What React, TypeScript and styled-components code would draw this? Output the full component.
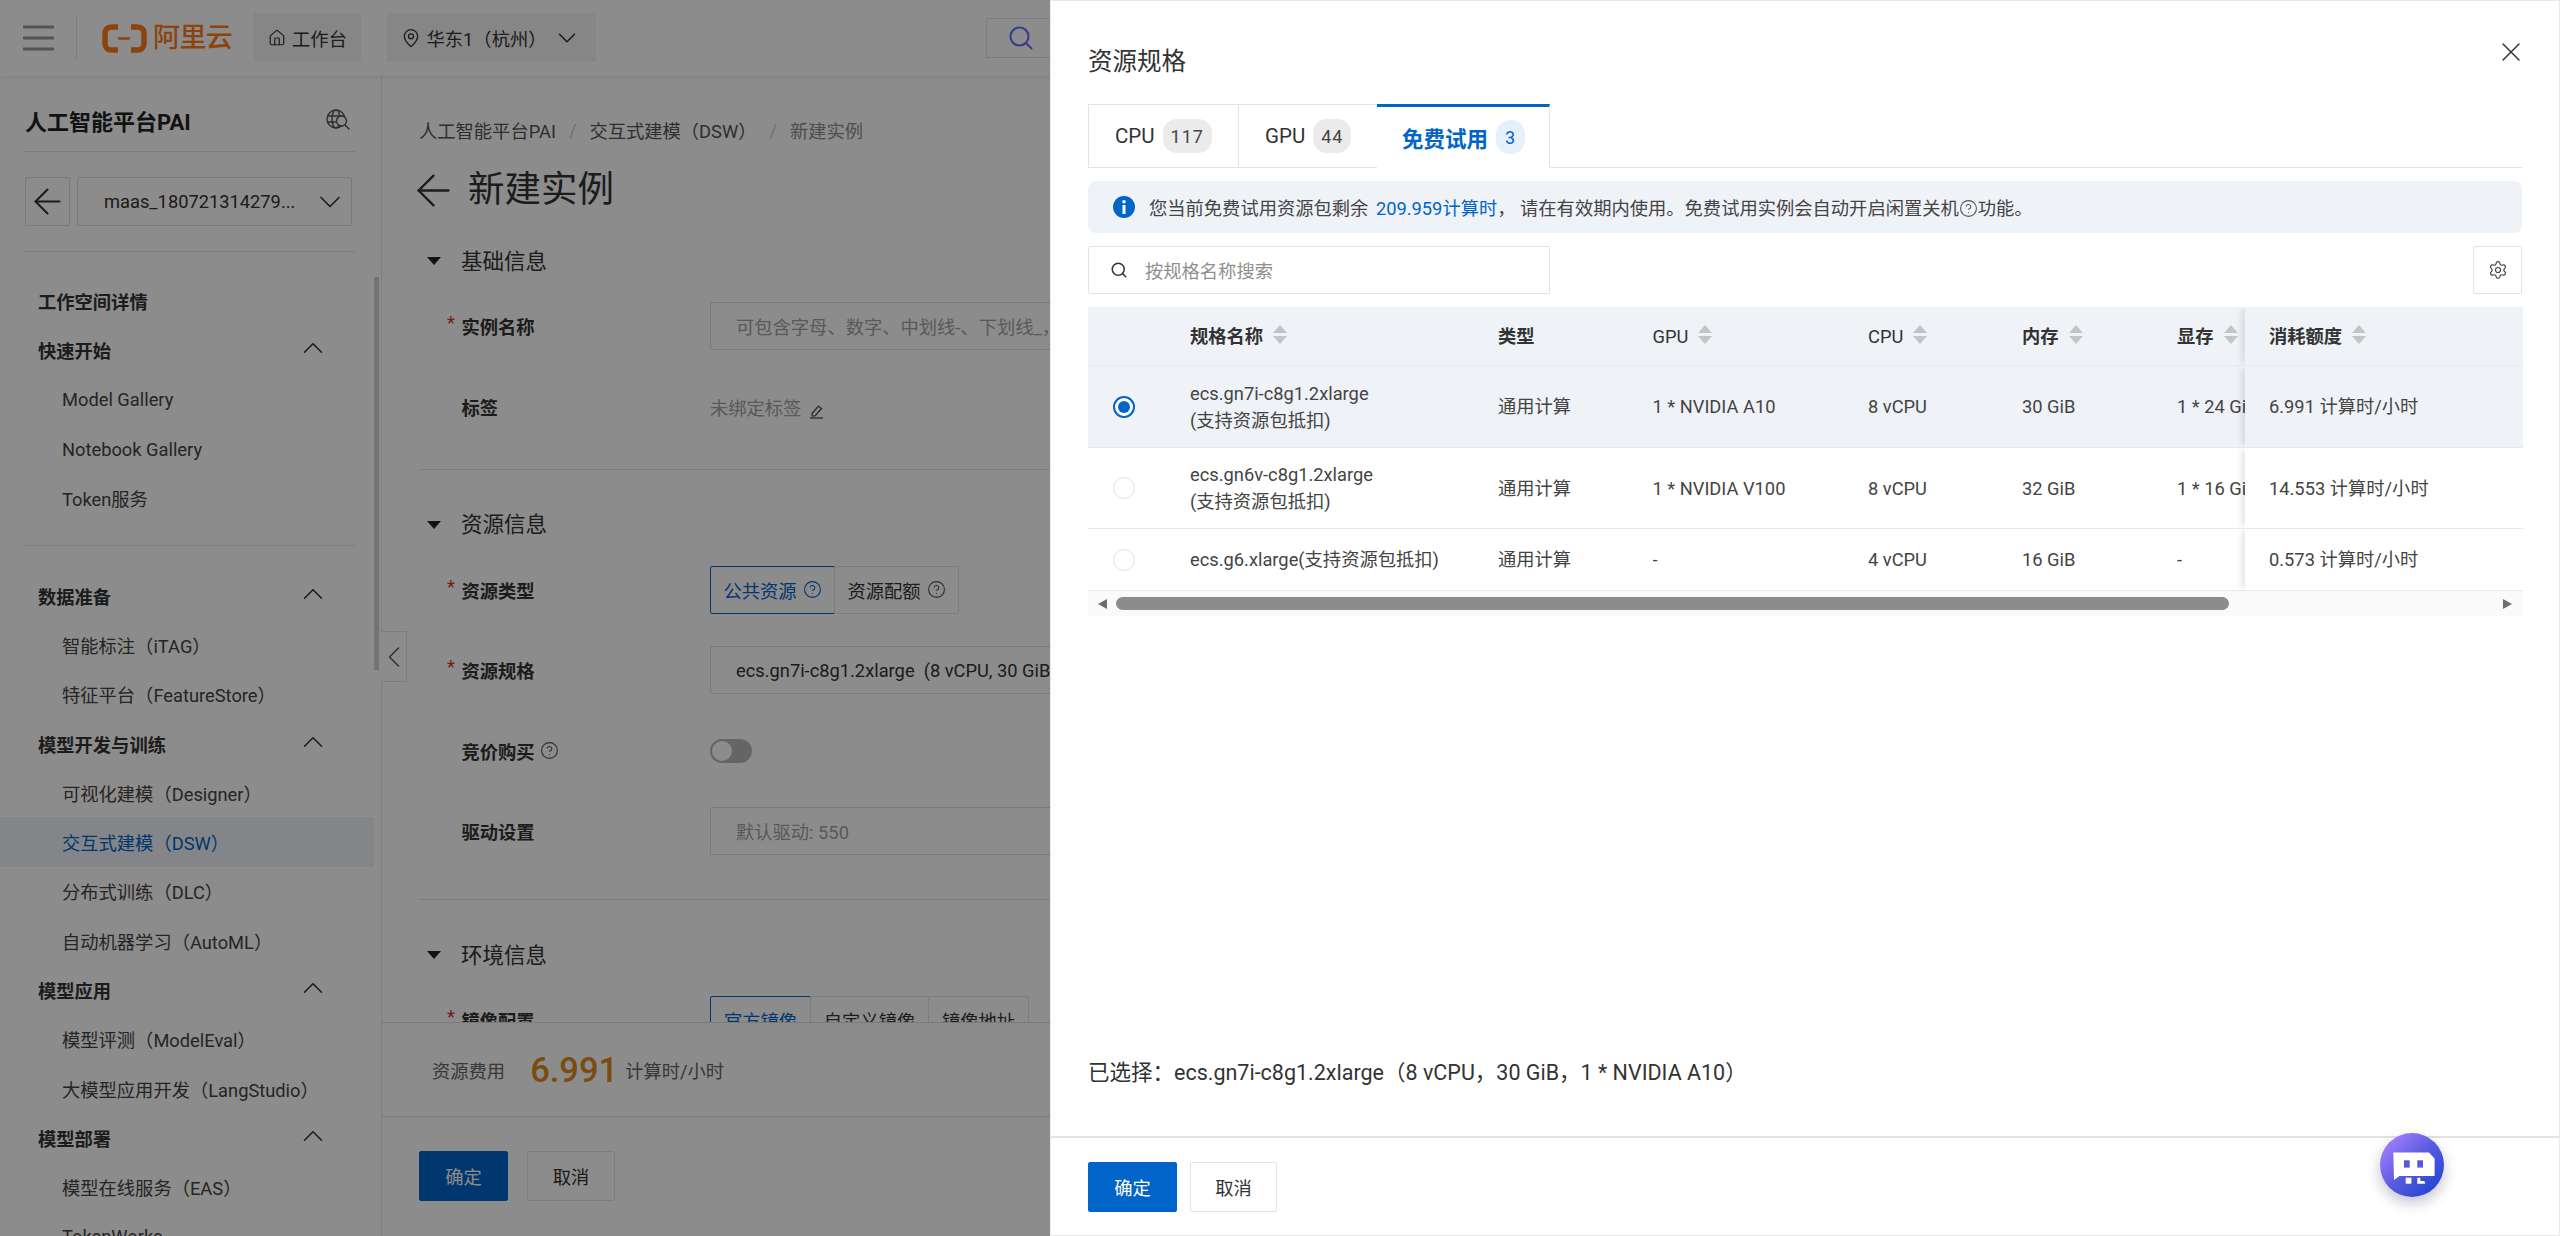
import React from "react";
import styled, { createGlobalStyle } from "styled-components";
import {
  ArrowLeft,
  ChevronDown,
  ChevronLeft,
  ChevronUp,
  CircleHelp,
  House,
  MapPin,
  Search,
  Settings,
  X,
} from "lucide-react";

const GlobalStyle = createGlobalStyle`
  html, body {
    margin: 0;
    height: 100%;
    overflow: hidden;
    background: #fff;
  }
  * {
    box-sizing: border-box;
  }
  body {
    font-family: Roboto, "Noto Sans CJK SC", sans-serif;
    font-size: 18.3px;
    color: #333;
  }
`;

const Page = styled.div`
  position: relative;
  width: 2560px;
  height: 1236px;
  overflow: hidden;
  display: flex;
  flex-direction: column;
`;

/* top bar */
const TopBar = styled.header`
  flex: none;
  height: 76px;
  display: flex;
  align-items: center;
  background: #fff;
  box-shadow: 0 2px 6px rgba(0, 0, 0, 0.08);
  position: relative;
  z-index: 1;
`;

const MenuButton = styled.div`
  width: 77px;
  height: 44px;
  display: flex;
  align-items: center;
  padding-left: 23px;
  border-right: 1px solid #e3e3e3;
`;

const LogoWrap = styled.div`
  width: 177px;
  display: flex;
  align-items: center;
  padding-left: 25px;
  gap: 6px;
`;

const LogoText = styled.span`
  font-size: 27px;
  font-weight: 500;
  color: #ff7a1a;
  letter-spacing: -0.6px;
  line-height: 30px;
`;

const TopButton = styled.div<{ $w: number }>`
  width: ${(p) => p.$w}px;
  height: 49px;
  margin-top: -1px;
  background: #f5f5f5;
  display: flex;
  align-items: center;
  justify-content: center;
  gap: 6px;
  color: #333;
  margin-right: 26px;

  svg {
    flex: none;
  }
`;

const TopSearch = styled.div`
  margin-left: 364px;
  width: 400px;
  height: 40px;
  border: 1px solid #e3e3e3;
  padding-left: 22px;
  display: flex;
  align-items: center;
`;

/* sidebar */
const Body = styled.div`
  flex: 1;
  min-height: 0;
  display: flex;
`;

const Sidebar = styled.aside`
  position: relative;
  flex: none;
  width: 382px;
  border-right: 1px solid #e8e8e8;
  overflow: hidden;
`;

const SideTitleRow = styled.div`
  height: 76px;
  margin: 0 26px 0 24px;
  display: flex;
  align-items: center;
  justify-content: space-between;
  border-bottom: 1px solid #e3e3e3;
  padding: 12px 4px 0 1px;
`;

const SideTitle = styled.div`
  font-size: 22px;
  font-weight: 700;
  color: #222;
`;

const WorkspaceRow = styled.div`
  height: 100px;
  margin: 0 26px 0 24px;
  display: flex;
  align-items: center;
  gap: 7px;
  border-bottom: 1px solid #e3e3e3;
  padding: 0 3px 0 1px;
`;

const BackBox = styled.div`
  width: 45px;
  height: 49px;
  border: 1px solid #ddd;
  border-radius: 2px;
  display: flex;
  align-items: center;
  justify-content: center;

  svg {
    flex: none;
  }
`;

const WorkspaceSelect = styled.div`
  flex: 1;
  height: 49px;
  border: 1px solid #ddd;
  border-radius: 2px;
  display: flex;
  align-items: center;
  justify-content: space-between;
  padding: 0 3px 0 26px;
`;

const Nav = styled.nav`
  padding-top: 24.5px;
`;

const NavGroup = styled.div`
  height: 49.3px;
  padding: 0 51px 0 38px;
  display: flex;
  align-items: center;
  justify-content: space-between;
  font-weight: 700;
  color: #333;

  svg {
    flex: none;
    margin-top: -4px;
  }
`;

const NavItem = styled.div<{ $active?: boolean }>`
  height: 49.3px;
  width: 374px;
  padding-left: 62px;
  display: flex;
  align-items: center;
  color: ${(p) => (p.$active ? "#0064c8" : "#444")};
  background: ${(p) => (p.$active ? "#eff3f8" : "transparent")};
  white-space: nowrap;
`;

const NavDivider = styled.div`
  height: 1px;
  margin: 22px 26px 25px 24px;
  background: #e8e8e8;
`;

const SideScroll = styled.div`
  position: absolute;
  right: 2px;
  top: 201px;
  width: 5px;
  height: 393px;
  background: #cfd1d8;
`;

const CollapseTab = styled.div`
  position: absolute;
  left: 381px;
  top: 631px;
  width: 26px;
  height: 51px;
  background: #fff;
  border: 1px solid #e3e3e3;
  border-left: none;
  display: flex;
  align-items: center;
  justify-content: center;
  z-index: 1;

  svg {
    flex: none;
  }
`;

/* main form */
const Main = styled.main`
  flex: 1;
  min-width: 0;
  display: flex;
  flex-direction: column;
`;

const MainScroll = styled.div`
  flex: 1;
  min-height: 0;
  overflow: hidden;
  padding: 42px 0 0 37px;
`;

const Crumbs = styled.div`
  height: 24px;
  display: flex;
  align-items: center;
  color: #555;
  white-space: nowrap;
`;

const CrumbSep = styled.span`
  color: #ccc;
  margin: 0 13px;
`;

const CrumbCurrent = styled.span`
  color: #8f8f8f;
`;

const TitleRow = styled.div`
  margin-top: 24px;
  height: 48px;
  display: flex;
  align-items: center;
  gap: 9px;

  svg {
    flex: none;
    margin-left: -11px;
  }
`;

const PageTitle = styled.h1`
  margin: 0;
  font-size: 36.5px;
  font-weight: 400;
  color: #333;
  line-height: 50px;
`;

const SectionHead = styled.div<{ $top: number }>`
  margin-top: ${(p) => p.$top}px;
  height: 30px;
  display: flex;
  align-items: center;
  padding-left: 8px;
  gap: 20px;
  font-size: 21.5px;
  color: #333;
`;

const SectionLabel = styled.span`
  margin-top: -4px;
`;

const Triangle = styled.i`
  width: 0;
  height: 0;
  border-left: 7.5px solid transparent;
  border-right: 7.5px solid transparent;
  border-top: 8px solid #222;
`;

const FormGroup = styled.div`
  margin-top: 26px;
  display: flex;
  flex-direction: column;
  gap: 32.5px;
`;

const FormRow = styled.div`
  height: 48px;
  display: flex;
  align-items: center;
`;

const Label = styled.label<{ $required?: boolean }>`
  position: relative;
  width: 291px;
  flex: none;
  padding-left: 42.5px;
  font-weight: 700;
  color: #333;
  display: flex;
  align-items: center;
  gap: 5px;

  &::before {
    content: ${(p) => (p.$required ? '"*"' : "none")};
    position: absolute;
    left: 28px;
    top: -1px;
    color: #d93026;
    font-weight: 400;
  }
`;

const FieldBox = styled.div<{ $muted?: boolean }>`
  width: 700px;
  height: 48px;
  border: 1px solid #ddd;
  border-radius: 2px;
  padding-left: 25px;
  display: flex;
  align-items: center;
  color: ${(p) => (p.$muted ? "#a3a3a3" : "#333")};
  white-space: pre;
  overflow: hidden;
`;

const TagText = styled.div`
  display: flex;
  align-items: center;
  gap: 8px;
  color: #a3a3a3;
`;

const EditSvg = styled.svg`
  margin-top: 9px;
`;

const Segments = styled.div`
  display: flex;
`;

const Segment = styled.div<{ $active?: boolean; $w: number }>`
  width: ${(p) => p.$w}px;
  height: 48px;
  display: flex;
  align-items: center;
  justify-content: center;
  gap: 6px;
  color: ${(p) => (p.$active ? "#0064c8" : "#333")};
  border: 1px solid ${(p) => (p.$active ? "#0064c8" : "#e3e3e3")};
  border-radius: 2px;
  margin-left: -1px;
  white-space: nowrap;

  &:first-child {
    margin-left: 0;
  }
`;

const Toggle = styled.div`
  width: 42px;
  height: 24px;
  border-radius: 12px;
  background: #b9b9b9;
  padding: 2px;
  display: flex;

  &::before {
    content: "";
    width: 20px;
    height: 20px;
    border-radius: 50%;
    background: #fff;
  }
`;

const Rule = styled.div<{ $top: number }>`
  margin-top: ${(p) => p.$top}px;
  height: 1px;
  background: #e3e3e3;
`;

const MainFooter = styled.div`
  flex: none;
  height: 214px;
  background: #fff;
  border-top: 1px solid #ddd;
`;

const PriceRow = styled.div`
  height: 94px;
  padding-left: 50px;
  display: flex;
  align-items: center;
  border-bottom: 1px solid #ddd;
  color: #666;
  white-space: nowrap;
`;

const PriceValue = styled.span`
  font-size: 34.5px;
  font-weight: 500;
  color: #e08a1e;
  margin: 0 7px 0 25px;
`;

const ButtonRow = styled.div<{ $gap: number; $top: number }>`
  display: flex;
  gap: ${(p) => p.$gap}px;
  padding: ${(p) => p.$top}px 0 0 37px;
`;

const Btn = styled.button<{ $primary?: boolean; $w: number }>`
  width: ${(p) => p.$w}px;
  height: 50px;
  font: inherit;
  border-radius: 2px;
  border: 1px solid ${(p) => (p.$primary ? "#0064c8" : "#e3e3e3")};
  background: ${(p) => (p.$primary ? "#0064c8" : "#fff")};
  color: ${(p) => (p.$primary ? "#fff" : "#333")};
  padding: 0;
`;

/* drawer */
const Mask = styled.div`
  position: absolute;
  inset: 0;
  background: rgba(0, 0, 0, 0.45);
  z-index: 5;
`;

const Drawer = styled.section`
  position: absolute;
  top: 0;
  right: 0;
  bottom: 0;
  width: 1510px;
  z-index: 6;
  background: #fff;
  border: 1px solid #e8e8e8;
  display: flex;
  flex-direction: column;
`;

const DrawerBody = styled.div`
  flex: 1;
  min-height: 0;
  padding: 0 37px;
  display: flex;
  flex-direction: column;
`;

const DrawerHead = styled.div`
  height: 103px;
  padding-top: 43px;
  display: flex;
  justify-content: space-between;
  align-items: flex-start;
`;

const DrawerTitle = styled.h2`
  margin: 0;
  font-size: 24.5px;
  font-weight: 400;
  line-height: 36px;
  color: #333;
`;

const CloseWrap = styled.div`
  margin: -8px -5px 0 0;
  line-height: 0;
  color: #333;
`;

const Tabs = styled.div`
  height: 64px;
  display: flex;
  border-bottom: 1px solid #e3e3e3;
`;

const Tab = styled.div<{ $active?: boolean; $w: number }>`
  width: ${(p) => p.$w}px;
  height: 64px;
  display: flex;
  align-items: center;
  gap: 8px;
  padding-left: ${(p) => (p.$active ? 25 : 26)}px;
  border: 1px solid #e3e3e3;
  border-left-width: ${(p) => (p.$active ? 0 : 1)}px;
  border-top: ${(p) => (p.$active ? "3px solid #0064c8" : "1px solid #e3e3e3")};
  border-bottom-color: ${(p) => (p.$active ? "#fff" : "#e3e3e3")};
  margin-right: -1px;
  background: #fff;
  font-size: ${(p) => (p.$active ? 21.5 : 20.5)}px;
  font-weight: ${(p) => (p.$active ? 700 : 400)};
  color: ${(p) => (p.$active ? "#0064c8" : "#333")};
`;

const TabCount = styled.span<{ $active?: boolean }>`
  height: 34px;
  min-width: 27px;
  padding: 0 ${(p) => (p.$active ? 9 : 8)}px;
  border-radius: 14px;
  display: flex;
  align-items: center;
  justify-content: center;
  font-size: 18px;
  font-weight: 400;
  letter-spacing: 1px;
  background: ${(p) => (p.$active ? "#e6f0fa" : "#ebebeb")};
  color: ${(p) => (p.$active ? "#0064c8" : "#444")};
`;

const Notice = styled.div`
  margin-top: 13px;
  height: 52px;
  border-radius: 8px;
  background: #eff2f7;
  padding-left: 25px;
  display: flex;
  align-items: center;
  gap: 14px;
  color: #444;
  white-space: nowrap;
`;

const NoticeLink = styled.span`
  color: #0064c8;
  margin-left: 3px;
`;

const InlineHelp = styled.span`
  display: inline-flex;
  vertical-align: -3px;
`;

const SearchRow = styled.div`
  margin-top: 13px;
  display: flex;
  justify-content: space-between;
`;

const SearchBox = styled.div`
  width: 462px;
  height: 48px;
  border: 1px solid #e3e3e3;
  border-radius: 2px;
  padding-left: 21px;
  display: flex;
  align-items: center;
  gap: 17px;
  color: #8f8f8f;
`;

const GearBox = styled.div`
  width: 49px;
  height: 48px;
  border: 1px solid #e3e3e3;
  border-radius: 2px;
  display: flex;
  align-items: center;
  justify-content: center;
`;

const SpecTable = styled.div`
  margin-top: 13px;
  width: 1435px;
`;

const SpecRow = styled.div<{ $h: number; $bg?: string }>`
  height: ${(p) => p.$h}px;
  display: grid;
  grid-template-columns: 102px 308px 154.5px 215.5px 154px 155px 67.5px 278.5px;
  background: ${(p) => p.$bg || "#fff"};
  border-bottom: 1px solid #e6e8ec;
`;

const Cell = styled.div<{ $head?: boolean; $strong?: boolean }>`
  display: flex;
  align-items: center;
  gap: 10px;
  overflow: hidden;
  white-space: nowrap;
  line-height: 27px;
  font-weight: ${(p) => (p.$strong ? 700 : 400)};
  color: ${(p) => (p.$head ? "#333" : "#444")};
`;

const RadioCell = styled.div`
  display: flex;
  align-items: center;
  padding-left: 25px;
`;

const Radio = styled.span<{ $on?: boolean }>`
  width: 22px;
  height: 22px;
  border-radius: 50%;
  border: ${(p) => (p.$on ? "2px solid #0064c8" : "1px solid #e3e3e3")};
  background: #fff;
  display: flex;
  align-items: center;
  justify-content: center;

  &::after {
    content: "";
    display: ${(p) => (p.$on ? "block" : "none")};
    width: 12px;
    height: 12px;
    border-radius: 50%;
    background: #0064c8;
  }
`;

const FixedCell = styled(Cell)`
  padding-left: 24.5px;
  position: relative;
  box-shadow: -6px 0 6px -2px rgba(0, 0, 0, 0.09);
  clip-path: inset(0 0 0 -10px);
`;

const SortIcon = styled.span`
  flex: none;
  display: inline-flex;
  flex-direction: column;
  gap: 3px;
  margin-top: -4px;

  &::before,
  &::after {
    content: "";
    width: 0;
    height: 0;
    border-left: 7px solid transparent;
    border-right: 7px solid transparent;
  }
  &::before {
    border-bottom: 8px solid #c4c4c4;
  }
  &::after {
    border-top: 8px solid #c4c4c4;
  }
`;

const HScroll = styled.div`
  height: 25px;
  background: #fafafa;
  display: flex;
  align-items: center;
  padding: 0 11px 0 10px;
`;

const ScrollArrow = styled.i<{ $right?: boolean }>`
  flex: none;
  width: 0;
  height: 0;
  border-top: 5.5px solid transparent;
  border-bottom: 5.5px solid transparent;
  ${(p) =>
    p.$right
      ? "border-left: 9px solid #6e6e6e; margin-left: auto;"
      : "border-right: 9px solid #6e6e6e;"}
`;

const ScrollThumb = styled.div`
  margin-left: 9px;
  width: 1113px;
  height: 13px;
  border-radius: 7px;
  background: #8c8c8c;
`;

const Selected = styled.div`
  margin-top: auto;
  padding-bottom: 50px;
  font-size: 21.5px;
  line-height: 26px;
  color: #333;
  white-space: nowrap;
`;

const DrawerFooter = styled.div`
  flex: none;
  height: 99px;
  border-top: 2px solid #e3e3e3;
`;

const BotButton = styled.div`
  position: absolute;
  left: 2380px;
  top: 1133px;
  width: 64px;
  height: 64px;
  border-radius: 50%;
  background: linear-gradient(135deg, #a680ff 8%, #5a5be0 50%, #1f44cc 92%);
  box-shadow: 0 6px 14px rgba(40, 40, 90, 0.28);
  z-index: 7;
`;

/* drawings */
const HamburgerIcon = () => (
  <svg width="32" height="26" viewBox="0 0 32 26">
    <path d="M0 2h31M0 13h31M0 24h31" stroke="#999" strokeWidth="3" />
  </svg>
);

const BracketMark = () => (
  <svg width="45" height="29" viewBox="0 0 45 29" fill="none">
    <path
      d="M16 3H9.500C5.500 3 3 5.500 3 9.500v10c0 4 2.500 6.500 6.500 6.500H16"
      stroke="#ff7a1a"
      strokeWidth="5.500"
    />
    <path
      d="M29 3h6.500C39.500 3 42 5.500 42 9.500v10c0 4-2.500 6.500-6.500 6.500H29"
      stroke="#ff7a1a"
      strokeWidth="5.500"
    />
    <path d="M16 14.500h12" stroke="#ff7a1a" strokeWidth="2.500" />
  </svg>
);

const GlobeSearch = () => (
  <svg width="25" height="22" viewBox="0 0 25 22" fill="none" stroke="#555" strokeWidth="1.400">
    <circle cx="10" cy="10" r="9" />
    <ellipse cx="10" cy="10" rx="4" ry="9" />
    <path d="M1 7h18M1 13h10" />
    <circle cx="15.500" cy="12" r="5" fill="#fff" />
    <path d="M19 16l4.500 4.500" />
  </svg>
);

const EditIcon = () => (
  <EditSvg width="15" height="16" viewBox="0 0 15 16" fill="none" stroke="#444" strokeWidth="1.200">
    <path d="M3 10.500 9.500 3l3 2.500L6 13H3.200z" />
    <path d="M1 15h13" />
  </EditSvg>
);

const GradientSearch = () => (
  <svg width="24" height="24" viewBox="0 0 24 24" fill="none" strokeWidth="2.200">
    <defs>
      <linearGradient id="topSearchGrad" x1="0" y1="0" x2="1" y2="1">
        <stop offset="0" stopColor="#3b8bff" />
        <stop offset="1" stopColor="#8a5cff" />
      </linearGradient>
    </defs>
    <circle cx="10.500" cy="10.500" r="9" stroke="url(#topSearchGrad)" />
    <path d="M17 17l6 6" stroke="#8a5cff" />
  </svg>
);

const InfoDot = () => (
  <svg width="22" height="22" viewBox="0 0 22 22">
    <circle cx="11" cy="11" r="11" fill="#0064c8" />
    <rect x="9.500" y="9" width="3" height="9" fill="#fff" />
    <circle cx="11" cy="5.800" r="1.800" fill="#fff" />
  </svg>
);

const BotGlyph = () => (
  <svg width="64" height="64" viewBox="0 0 64 64">
    <path d="M13.300 19.600H49l5.600 6V43H19.300L14 47z" fill="#fff" />
    <rect x="24" y="27.300" width="5.700" height="7.300" fill="#5658dc" />
    <rect x="37.300" y="27.300" width="5.700" height="7.300" fill="#5658dc" />
    <rect x="25.700" y="44.700" width="5.700" height="6" fill="#fff" />
    <path d="M37.300 44.700h3v3.400h4l1 2.600h-8z" fill="#fff" />
  </svg>
);

const Help = ({ size = 19, color = "#555" }: { size?: number; color?: string }) => (
  <CircleHelp size={size} color={color} strokeWidth={1.4} />
);

/* data */
const navEntries: { text: string; kind: "plain" | "group" | "item" | "rule"; active?: boolean }[] = [
  { text: "工作空间详情", kind: "plain" },
  { text: "快速开始", kind: "group" },
  { text: "Model Gallery", kind: "item" },
  { text: "Notebook Gallery", kind: "item" },
  { text: "Token服务", kind: "item" },
  { text: "", kind: "rule" },
  { text: "数据准备", kind: "group" },
  { text: "智能标注（iTAG）", kind: "item" },
  { text: "特征平台（FeatureStore）", kind: "item" },
  { text: "模型开发与训练", kind: "group" },
  { text: "可视化建模（Designer）", kind: "item" },
  { text: "交互式建模（DSW）", kind: "item", active: true },
  { text: "分布式训练（DLC）", kind: "item" },
  { text: "自动机器学习（AutoML）", kind: "item" },
  { text: "模型应用", kind: "group" },
  { text: "模型评测（ModelEval）", kind: "item" },
  { text: "大模型应用开发（LangStudio）", kind: "item" },
  { text: "模型部署", kind: "group" },
  { text: "模型在线服务（EAS）", kind: "item" },
  { text: "TokenWorks", kind: "item" },
];

const specs = [
  {
    name: ["ecs.gn7i-c8g1.2xlarge", "(支持资源包抵扣)"],
    gpu: "1 * NVIDIA A10",
    cpu: "8 vCPU",
    mem: "30 GiB",
    vram: "1 * 24 GiB",
    cost: "6.991 计算时/小时",
    h: 82,
    on: true,
  },
  {
    name: ["ecs.gn6v-c8g1.2xlarge", "(支持资源包抵扣)"],
    gpu: "1 * NVIDIA V100",
    cpu: "8 vCPU",
    mem: "32 GiB",
    vram: "1 * 16 GiB",
    cost: "14.553 计算时/小时",
    h: 81,
    on: false,
  },
  {
    name: ["ecs.g6.xlarge(支持资源包抵扣)"],
    gpu: "-",
    cpu: "4 vCPU",
    mem: "16 GiB",
    vram: "-",
    cost: "0.573 计算时/小时",
    h: 62,
    on: false,
  },
];

export default function App() {
  return (
    <Page>
      <GlobalStyle />
      <TopBar>
        <MenuButton>
          <HamburgerIcon />
        </MenuButton>
        <LogoWrap>
          <BracketMark />
          <LogoText>阿里云</LogoText>
        </LogoWrap>
        <TopButton $w={107}>
          <House size={18} strokeWidth={1.6} color="#333" />
          工作台
        </TopButton>
        <TopButton $w={209}>
          <MapPin size={20} strokeWidth={1.6} color="#333" />
          华东1（杭州）
          <ChevronDown size={30} strokeWidth={1.3} color="#333" />
        </TopButton>
        <TopSearch>
          <GradientSearch />
        </TopSearch>
      </TopBar>

      <Body>
        <Sidebar>
          <SideTitleRow>
            <SideTitle>人工智能平台PAI</SideTitle>
            <GlobeSearch />
          </SideTitleRow>
          <WorkspaceRow>
            <BackBox>
              <ArrowLeft size={41} strokeWidth={1.2} color="#333" />
            </BackBox>
            <WorkspaceSelect>
              maas_180721314279...
              <ChevronDown size={36} strokeWidth={1.1} color="#333" />
            </WorkspaceSelect>
          </WorkspaceRow>
          <Nav>
            {navEntries.map((entry, i) => {
              if (entry.kind === "rule") return <NavDivider key={i} />;
              if (entry.kind === "item")
                return (
                  <NavItem key={i} $active={entry.active}>
                    {entry.text}
                  </NavItem>
                );
              return (
                <NavGroup key={i}>
                  {entry.text}
                  {entry.kind === "group" && <ChevronUp size={34} strokeWidth={1.1} color="#333" />}
                </NavGroup>
              );
            })}
          </Nav>
          <SideScroll />
        </Sidebar>

        <Main>
          <MainScroll>
            <Crumbs>
              人工智能平台PAI
              <CrumbSep>/</CrumbSep>
              交互式建模（DSW）
              <CrumbSep>/</CrumbSep>
              <CrumbCurrent>新建实例</CrumbCurrent>
            </Crumbs>
            <TitleRow>
              <ArrowLeft size={51} strokeWidth={1.1} color="#333" />
              <PageTitle>新建实例</PageTitle>
            </TitleRow>

            <SectionHead $top={32}>
              <Triangle />
              <SectionLabel>基础信息</SectionLabel>
            </SectionHead>
            <FormGroup>
              <FormRow>
                <Label $required>实例名称</Label>
                <FieldBox $muted>可包含字母、数字、中划线-、下划线_，以字母开头</FieldBox>
              </FormRow>
              <FormRow>
                <Label>标签</Label>
                <TagText>
                  未绑定标签
                  <EditIcon />
                </TagText>
              </FormRow>
            </FormGroup>
            <Rule $top={38} />

            <SectionHead $top={40}>
              <Triangle />
              <SectionLabel>资源信息</SectionLabel>
            </SectionHead>
            <FormGroup>
              <FormRow>
                <Label $required>资源类型</Label>
                <Segments>
                  <Segment $active $w={125}>
                    公共资源
                    <Help color="#0064c8" />
                  </Segment>
                  <Segment $w={125}>
                    资源配额
                    <Help />
                  </Segment>
                </Segments>
              </FormRow>
              <FormRow>
                <Label $required>资源规格</Label>
                <FieldBox>{"ecs.gn7i-c8g1.2xlarge  (8 vCPU, 30 GiB, 1 * NVIDIA A10)"}</FieldBox>
              </FormRow>
              <FormRow>
                <Label>
                  竞价购买
                  <Help />
                </Label>
                <Toggle />
              </FormRow>
              <FormRow>
                <Label>驱动设置</Label>
                <FieldBox $muted>默认驱动: 550</FieldBox>
              </FormRow>
            </FormGroup>
            <Rule $top={44} />

            <SectionHead $top={40}>
              <Triangle />
              <SectionLabel>环境信息</SectionLabel>
            </SectionHead>
            <FormGroup>
              <FormRow>
                <Label $required>镜像配置</Label>
                <Segments>
                  <Segment $active $w={101}>
                    官方镜像
                  </Segment>
                  <Segment $w={119}>自定义镜像</Segment>
                  <Segment $w={101}>镜像地址</Segment>
                </Segments>
              </FormRow>
            </FormGroup>
          </MainScroll>

          <MainFooter>
            <PriceRow>
              资源费用
              <PriceValue>6.991</PriceValue>
              计算时/小时
            </PriceRow>
            <ButtonRow $gap={19} $top={34}>
              <Btn $primary $w={89}>
                确定
              </Btn>
              <Btn $w={88}>取消</Btn>
            </ButtonRow>
          </MainFooter>
        </Main>
      </Body>

      <CollapseTab>
        <ChevronLeft size={36} strokeWidth={1} color="#555" />
      </CollapseTab>

      <Mask />

      <Drawer>
        <DrawerBody>
          <DrawerHead>
            <DrawerTitle>资源规格</DrawerTitle>
            <CloseWrap>
              <X size={32} strokeWidth={1.1} />
            </CloseWrap>
          </DrawerHead>
          <Tabs>
            <Tab $w={151}>
              CPU <TabCount>117</TabCount>
            </Tab>
            <Tab $w={140}>
              GPU <TabCount>44</TabCount>
            </Tab>
            <Tab $active $w={173}>
              免费试用 <TabCount $active>3</TabCount>
            </Tab>
          </Tabs>
          <Notice>
            <InfoDot />
            <span>
              您当前免费试用资源包剩余 <NoticeLink>209.959计算时</NoticeLink>， 请在有效期内使用。免费试用实例会自动开启闲置关机
              <InlineHelp>
                <Help />
              </InlineHelp>
              功能。
            </span>
          </Notice>
          <SearchRow>
            <SearchBox>
              <Search size={18} strokeWidth={2} color="#333" />
              按规格名称搜索
            </SearchBox>
            <GearBox>
              <Settings size={20} strokeWidth={1.4} color="#444" />
            </GearBox>
          </SearchRow>

          <SpecTable>
            <SpecRow $h={59} $bg="#eff2f7">
              <Cell $head />
              <Cell $head $strong>
                规格名称 <SortIcon />
              </Cell>
              <Cell $head $strong>
                类型
              </Cell>
              <Cell $head>
                GPU <SortIcon />
              </Cell>
              <Cell $head>
                CPU <SortIcon />
              </Cell>
              <Cell $head $strong>
                内存 <SortIcon />
              </Cell>
              <Cell $head $strong>
                显存 <SortIcon />
              </Cell>
              <FixedCell $head $strong>
                消耗额度 <SortIcon />
              </FixedCell>
            </SpecRow>
            {specs.map((spec) => (
              <SpecRow key={spec.name[0]} $h={spec.h} $bg={spec.on ? "#eff2f7" : "#fff"}>
                <RadioCell>
                  <Radio $on={spec.on} />
                </RadioCell>
                <Cell>
                  <div>
                    {spec.name.map((line) => (
                      <div key={line}>{line}</div>
                    ))}
                  </div>
                </Cell>
                <Cell>通用计算</Cell>
                <Cell>{spec.gpu}</Cell>
                <Cell>{spec.cpu}</Cell>
                <Cell>{spec.mem}</Cell>
                <Cell>{spec.vram}</Cell>
                <FixedCell>{spec.cost}</FixedCell>
              </SpecRow>
            ))}
            <HScroll>
              <ScrollArrow />
              <ScrollThumb />
              <ScrollArrow $right />
            </HScroll>
          </SpecTable>

          <Selected>已选择：ecs.gn7i-c8g1.2xlarge（8 vCPU，30 GiB，1 * NVIDIA A10）</Selected>
        </DrawerBody>
        <DrawerFooter>
          <ButtonRow $gap={13} $top={24}>
            <Btn $primary $w={89}>
              确定
            </Btn>
            <Btn $w={87}>取消</Btn>
          </ButtonRow>
        </DrawerFooter>
      </Drawer>

      <BotButton>
        <BotGlyph />
      </BotButton>
    </Page>
  );
}
